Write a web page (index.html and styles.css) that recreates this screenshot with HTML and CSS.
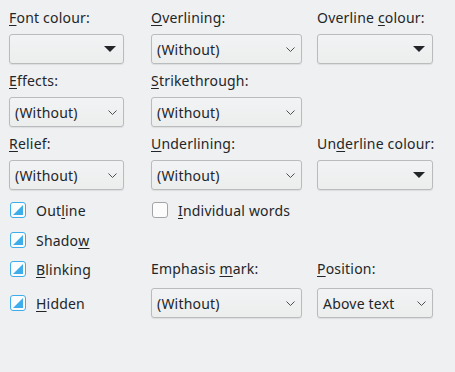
FILE: index.html
```html
<!DOCTYPE html>
<html>
<head>
<meta charset="utf-8">
<link rel="stylesheet" href="styles.css">
</head>
<body>
<div class="form">
  <div class="lbl c1 r1"><u>F</u>ont colour:</div>
  <div class="lbl c2 r1"><u>O</u>verlining:</div>
  <div class="lbl c3 r1">Overline <u>c</u>olour:</div>

  <div class="combo color c1 r2"><span class="tri"></span></div>
  <div class="combo c2 r2"><span class="val">(Without)</span><svg class="chev" width="9" height="5" viewBox="0 0 9 5"><path d="M0.5 0.5 L4.5 4.5 L8.5 0.5" fill="none" stroke="#4d4f52" stroke-width="1"/></svg></div>
  <div class="combo color c3 r2"><span class="tri"></span></div>

  <div class="lbl c1 r3"><u>E</u>ffects:</div>
  <div class="lbl c2 r3"><u>S</u>trikethrough:</div>

  <div class="combo c1 r4"><span class="val">(Without)</span><svg class="chev" width="9" height="5" viewBox="0 0 9 5"><path d="M0.5 0.5 L4.5 4.5 L8.5 0.5" fill="none" stroke="#4d4f52" stroke-width="1"/></svg></div>
  <div class="combo c2 r4"><span class="val">(Without)</span><svg class="chev" width="9" height="5" viewBox="0 0 9 5"><path d="M0.5 0.5 L4.5 4.5 L8.5 0.5" fill="none" stroke="#4d4f52" stroke-width="1"/></svg></div>

  <div class="lbl c1 r5"><u>R</u>elief:</div>
  <div class="lbl c2 r5"><u>U</u>nderlining:</div>
  <div class="lbl c3 r5">Un<u>d</u>erline colour:</div>

  <div class="combo c1 r6"><span class="val">(Without)</span><svg class="chev" width="9" height="5" viewBox="0 0 9 5"><path d="M0.5 0.5 L4.5 4.5 L8.5 0.5" fill="none" stroke="#4d4f52" stroke-width="1"/></svg></div>
  <div class="combo c2 r6"><span class="val">(Without)</span><svg class="chev" width="9" height="5" viewBox="0 0 9 5"><path d="M0.5 0.5 L4.5 4.5 L8.5 0.5" fill="none" stroke="#4d4f52" stroke-width="1"/></svg></div>
  <div class="combo color c3 r6"><span class="tri"></span></div>

  <div class="check c1 r7"><span class="box partial"><svg width="10" height="10" viewBox="0 0 10 10"><path d="M10 0 L10 10 L0 10 Z" fill="#3daee9"/></svg></span>Out<u>l</u>ine</div>
  <div class="check c2 r7"><span class="box"></span><u>I</u>ndividual words</div>

  <div class="check c1 r8"><span class="box partial"><svg width="10" height="10" viewBox="0 0 10 10"><path d="M10 0 L10 10 L0 10 Z" fill="#3daee9"/></svg></span>Shado<u>w</u></div>

  <div class="check c1 r9"><span class="box partial"><svg width="10" height="10" viewBox="0 0 10 10"><path d="M10 0 L10 10 L0 10 Z" fill="#3daee9"/></svg></span><u>B</u>linking</div>
  <div class="lbl c2 r9">Emphasis <u>m</u>ark:</div>
  <div class="lbl c3 r9"><u>P</u>osition:</div>

  <div class="check c1 r10 mid"><span class="box partial"><svg width="10" height="10" viewBox="0 0 10 10"><path d="M10 0 L10 10 L0 10 Z" fill="#3daee9"/></svg></span><u>H</u>idden</div>
  <div class="combo c2 r10"><span class="val">(Without)</span><svg class="chev" width="9" height="5" viewBox="0 0 9 5"><path d="M0.5 0.5 L4.5 4.5 L8.5 0.5" fill="none" stroke="#4d4f52" stroke-width="1"/></svg></div>
  <div class="combo c3 r10"><span class="val">Above text</span><svg class="chev" width="9" height="5" viewBox="0 0 9 5"><path d="M0.5 0.5 L4.5 4.5 L8.5 0.5" fill="none" stroke="#4d4f52" stroke-width="1"/></svg></div>
</div>
</body>
</html>
```

FILE: styles.css
```css
html, body {
  margin: 0;
  padding: 0;
  background: #eff0f1;
}
body {
  font-family: "Noto Sans", "DejaVu Sans", sans-serif;
  font-size: 14px;
  letter-spacing: 0.2px;
  color: #232629;
  width: 455px;
  height: 372px;
  overflow: hidden;
}
u {
  text-decoration: underline;
  text-decoration-thickness: 1px;
  text-underline-offset: 2px;
}
.form {
  display: grid;
  padding: 8px 0 0 9px;
  grid-template-columns: 142px 166px 116px;
  grid-template-rows: 20px 36px 27px 36px 27px 36px 30px 30px 29px 39px;
}
.c1 { grid-column: 1; }
.c2 { grid-column: 2; }
.c3 { grid-column: 3; }
.r1 { grid-row: 1; }
.r2 { grid-row: 2; }
.r3 { grid-row: 3; }
.r4 { grid-row: 4; }
.r5 { grid-row: 5; }
.r6 { grid-row: 6; }
.r7 { grid-row: 7; }
.r8 { grid-row: 8; }
.r9 { grid-row: 9; }
.r10 { grid-row: 10; }

.lbl {
  align-self: end;
  height: 20px;
  line-height: 20px;
  white-space: nowrap;
}
.combo {
  align-self: end;
  box-sizing: border-box;
  height: 30px;
  border: 1px solid #b9bbbd;
  border-radius: 3px;
  background: linear-gradient(#f2f3f4, #eceded);
  box-shadow: 0 1px 1px rgba(0,0,0,0.08);
  display: flex;
  align-items: center;
  padding: 0 6px 0 5px;
}
.c1.combo { width: 115px; }
.c2.combo { width: 151px; }
.c3.combo { width: 116px; }
.combo .val {
  flex: 1;
  white-space: nowrap;
}
.combo .chev {
  flex: none;
}
.combo.color {
  justify-content: flex-end;
  padding-right: 7px;
}
.tri {
  width: 0;
  height: 0;
  border-left: 6px solid transparent;
  border-right: 6px solid transparent;
  border-top: 6px solid #232629;
}
.check {
  align-self: end;
  height: 20px;
  display: flex;
  align-items: center;
  white-space: nowrap;
}
.check.mid {
  margin-bottom: 5px;
}
.box {
  box-sizing: border-box;
  width: 16px;
  height: 16px;
  margin-left: 1px;
  margin-right: 10px;
  border: 1px solid #a2a4a6;
  border-radius: 3px;
  background: #fcfcfc;
  display: flex;
  align-items: center;
  justify-content: center;
}
.box.partial {
  border-color: #3daee9;
}
```
